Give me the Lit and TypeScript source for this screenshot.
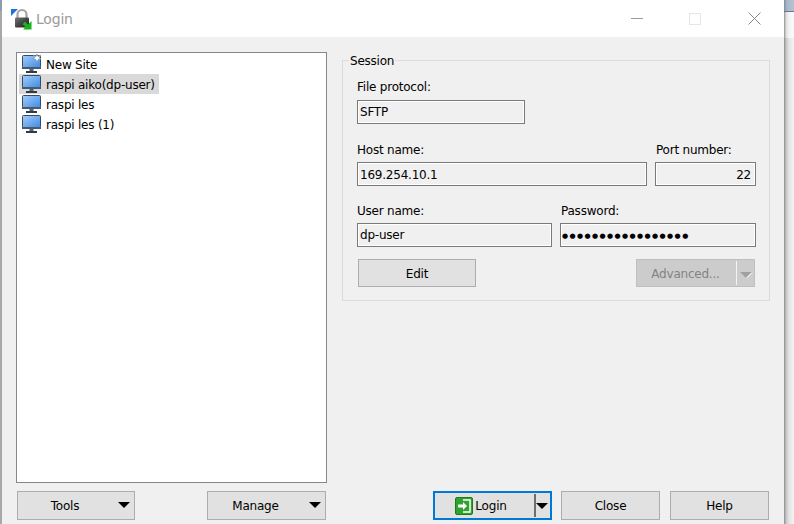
import { LitElement, html, css, svg } from "lit";
import { customElement } from "lit/decorators.js";

const monitor = (star = false) => html`<svg class="mon" width="20" height="20" viewBox="0 0 20 20">
  <defs><linearGradient id="sc" x1="0" y1="0" x2="1" y2="1"><stop offset="0" stop-color="#a6cdf7"/><stop offset="1" stop-color="#3d8be6"/></linearGradient></defs>
  <rect x="0.5" y="1.5" width="18" height="12" rx="1" fill="url(#sc)" stroke="#3a4a5c"/>
  <rect x="0" y="13" width="19" height="2" fill="#4a5a6c"/>
  <rect x="7.5" y="15" width="4" height="2" fill="#56636f"/>
  <rect x="4" y="17" width="11" height="2" fill="#2f3d4b"/>
  ${star ? svg`<g transform="translate(15 4)"><path d="M0-4 1-1.5 3.5-2.8 2.2-.3 4 1 1.4 1.3 0 4-1.4 1.3-4 1-2.2-.3-3.5-2.8-1-1.5Z" fill="#fff" stroke="#7f93a8" stroke-width=".8"/></g>` : ""}
</svg>`;

@customElement("app-root")
export class AppRoot extends LitElement {
  static styles = css`
    :host { display: block; width: 794px; height: 524px; overflow: hidden; background: #fff; font: 12px "DejaVu Sans", "Noto Sans", sans-serif; letter-spacing: -0.22px; color: #000; }
    .desk { display: flex; height: 524px; }
    .edge-l { width: 2px; background: #a8a8a8; display: flex; flex-direction: column; }
    .cap-l { height: 11px; background: #8f9cab; }
    .edge-r { width: 10px; display: flex; flex-direction: column; }
    .cap { height: 11px; flex: none; border-bottom: 1px solid #66778a; background: linear-gradient(90deg, #7f8e9e 0, #aab9c9 3px, #b4c2d1 100%); }
    .band { height: 26px; flex: none; background: linear-gradient(90deg, #8f8f8f 0, #dcdcdc 2px, #f4f4f4 5px, #fbfbfb 100%); }
    .shade { flex: 1; background: linear-gradient(90deg, #8a8a8a 0, #c4c4c4 2px, #e4e4e4 5px, #f4f4f4 100%); }
    .win { width: 782px; display: flex; flex-direction: column; background: #f0f0f0; }
    .title { height: 37px; flex: none; background: #fff; display: flex; align-items: center; padding-left: 9px; color: #9a9a9a; font-size: 14px; letter-spacing: -0.2px; gap: 3px; }
    .title .name { flex: 1; }
    .ctl { width: 20px; height: 37px; display: flex; align-items: center; justify-content: center; }
    .ctl.x { margin-left: 1px; }
    .ctls { display: flex; gap: 38px; padding-right: 20px; }
    .main { flex: 1; display: flex; padding: 15px 14px 0 14px; gap: 15px; }
    .left { width: 311px; display: flex; flex-direction: column; }
    .list { height: 431px; box-sizing: border-box; border: 1px solid #828790; background: #fff; padding: 1px 2px; }
    .row { display: flex; align-items: center; height: 20px; gap: 4px; padding-left: 3px; width: max-content; padding-right: 4px; color: #000; }
    .row span { padding-top: 2px; }
    .row.sel { background: #d9d9d9; }
    .left-btns { display: flex; justify-content: space-between; margin-top: 8px; padding: 0 1px 0 1px; }
    .btn { height: 29px; box-sizing: border-box; border: 1px solid #adadad; background: #e1e1e1; display: flex; align-items: center; justify-content: center; position: relative; }
    .tri { width: 0; height: 0; border-left: 6px solid transparent; border-right: 6px solid transparent; border-top: 6px solid #000; }
    .w118 { width: 118px; }
    .w119 { width: 119px; }
    .drop { padding-right: 22px; }
    .drop .tri { position: absolute; right: 4px; top: 10px; }
    .right { flex: 1; display: flex; flex-direction: column; width: 428px; }
    fieldset { margin: 1px 0 0; padding: 0 13px 0 14px; border: 1px solid #dcdcdc; height: 248px; box-sizing: border-box; width: 428px; display: flex; flex-direction: column; min-width: 0; }
    legend { padding: 0 1px; margin-left: -8px; line-height: 16px; height: 14px; }
    .f-row { display: flex; gap: 8px; }
    label { display: block; height: 16px; line-height: 18px; margin-bottom: 5px; color: #000; }
    .proto-wrap label { line-height: 16px; }
    .g2 label, .g4 label { padding-left: 1px; }
    .in { height: 24px; box-sizing: border-box; border: 1px solid #7a7a7a; background: #f0f0f0; display: flex; align-items: center; padding: 2px 0 0 2px; box-shadow: inset 0 0 0 1px #fff; }
    .in.proto { width: 168px; padding-top: 0; }
    .proto-wrap { margin-top: 12px; }
    .host { margin-top: 17px; }
    .user { margin-top: 16px; }
    .g1 { width: 290px; }
    .g2 { width: 101px; }
    .g3 { width: 195px; }
    .g3 .in { padding-top: 0; }
    .g4 { width: 196px; }
    .in.num { justify-content: flex-end; padding-right: 4px; }
    .in.dots { letter-spacing: 1.4px; font-size: 7px; padding: 1px 0 0 1px; }
    .act { display: flex; justify-content: space-between; margin-top: 12px; padding: 0 1px; }
    .act .btn { height: 28px; padding-top: 2px; }
    .act .btn.adv { background: #cccccc; border-color: #bfbfbf; color: #838383; padding-right: 20px; width: 119px; }
    .adv .sep { position: absolute; right: 17px; top: 1px; bottom: 1px; width: 1px; background: #f4f4f4; }
    .adv svg { position: absolute; right: 1px; top: 12px; }
    .bot { margin-top: auto; display: flex; margin-bottom: 4px; padding-left: 91px; gap: 9px; }
    .login { width: 119px; border: 2px solid #0078d7; padding-right: 21px; gap: 2px; }
    .login .sep { position: absolute; right: 14px; top: 1px; bottom: 1px; width: 2px; background: #6e6e6e; }
    .login .tri { position: absolute; right: 2px; top: 10px; }
    .w99 { width: 99px; }
    .help { margin-left: 1px; }
  `;

  render() {
    return html`<div class="desk">
      <div class="edge-l"><div class="cap-l"></div></div>
      <div class="win">
        <div class="title">
          <svg width="22" height="22" viewBox="0 0 22 22">
            <defs><linearGradient id="lk" x1="0" y1="0" x2="1" y2="1"><stop offset="0" stop-color="#777"/><stop offset=".5" stop-color="#444"/><stop offset="1" stop-color="#222"/></linearGradient></defs>
            <path d="M0 1h7L0 8Z" fill="#1b74d8"/>
            <path d="M6.5 10V6.5a4.5 4.5 0 0 1 9 0V10" fill="none" stroke="#a4a4a4" stroke-width="2.2"/>
            <rect x="4" y="9.5" width="14" height="10" rx="1" fill="url(#lk)"/>
            <path d="M20.5 13v8.5h-8.5l2.5-2.5-3-3 2.5-2.5 3 3Z" fill="#19b21c"/>
          </svg>
          <span class="name">Login</span>
          <div class="ctls">
            <div class="ctl"><svg width="12" height="12"><rect x="0" y="5" width="12" height="1" fill="#9a9a9a"/></svg></div>
            <div class="ctl"><svg width="12" height="12"><rect x=".5" y=".5" width="11" height="11" fill="none" stroke="#e6e6e6"/></svg></div>
            <div class="ctl x"><svg width="13" height="13"><path d="M.5.5l12 12M12.5.5l-12 12" stroke="#8a8a8a" fill="none"/></svg></div>
          </div>
        </div>
        <div class="main">
          <div class="left">
            <div class="list">
              <div class="row">${monitor(true)}<span>New Site</span></div>
              <div class="row sel">${monitor()}<span>raspi aiko(dp-user)</span></div>
              <div class="row">${monitor()}<span>raspi les</span></div>
              <div class="row">${monitor()}<span>raspi les (1)</span></div>
            </div>
            <div class="left-btns">
              <div class="btn w118 drop">Tools<span class="tri"></span></div>
              <div class="btn w119 drop">Manage<span class="tri"></span></div>
            </div>
          </div>
          <div class="right">
            <fieldset>
              <legend>Session</legend>
              <div class="proto-wrap">
                <label>File protocol:</label>
                <div class="in proto">SFTP</div>
              </div>
              <div class="f-row host">
                <div class="g1"><label>Host name:</label><div class="in">169.254.10.1</div></div>
                <div class="g2"><label>Port number:</label><div class="in num">22</div></div>
              </div>
              <div class="f-row user">
                <div class="g3"><label>User name:</label><div class="in">dp-user</div></div>
                <div class="g4"><label>Password:</label><div class="in dots">●●●●●●●●●●●●●●●●●</div></div>
              </div>
              <div class="act">
                <div class="btn w118">Edit</div>
                <div class="btn adv">Advanced...<span class="sep"></span>
                  <svg width="14" height="7" viewBox="0 0 14 7"><path d="M1 0h12L7 6Z" fill="#a0a0a0"/><path d="M7.5 6 13 .5" stroke="#fff" fill="none"/></svg>
                </div>
              </div>
            </fieldset>
            <div class="bot">
              <div class="btn login">
                <svg width="18" height="18" viewBox="0 0 18 18">
                  <rect x=".5" y=".5" width="17" height="17" rx="1.5" fill="#2fa32f" stroke="#1d7d1d"/>
                  <path d="M8 3h7v12H8" fill="none" stroke="#fff" stroke-width="1.5"/>
                  <path d="M3 7.5h5V5l4 4-4 4v-2.5H3Z" fill="#fff"/>
                </svg>
                Login<span class="sep"></span><span class="tri"></span>
              </div>
              <div class="btn w99">Close</div>
              <div class="btn w99 help">Help</div>
            </div>
          </div>
        </div>
      </div>
      <div class="edge-r"><div class="cap"></div><div class="band"></div><div class="shade"></div></div>
    </div>`;
  }
}
